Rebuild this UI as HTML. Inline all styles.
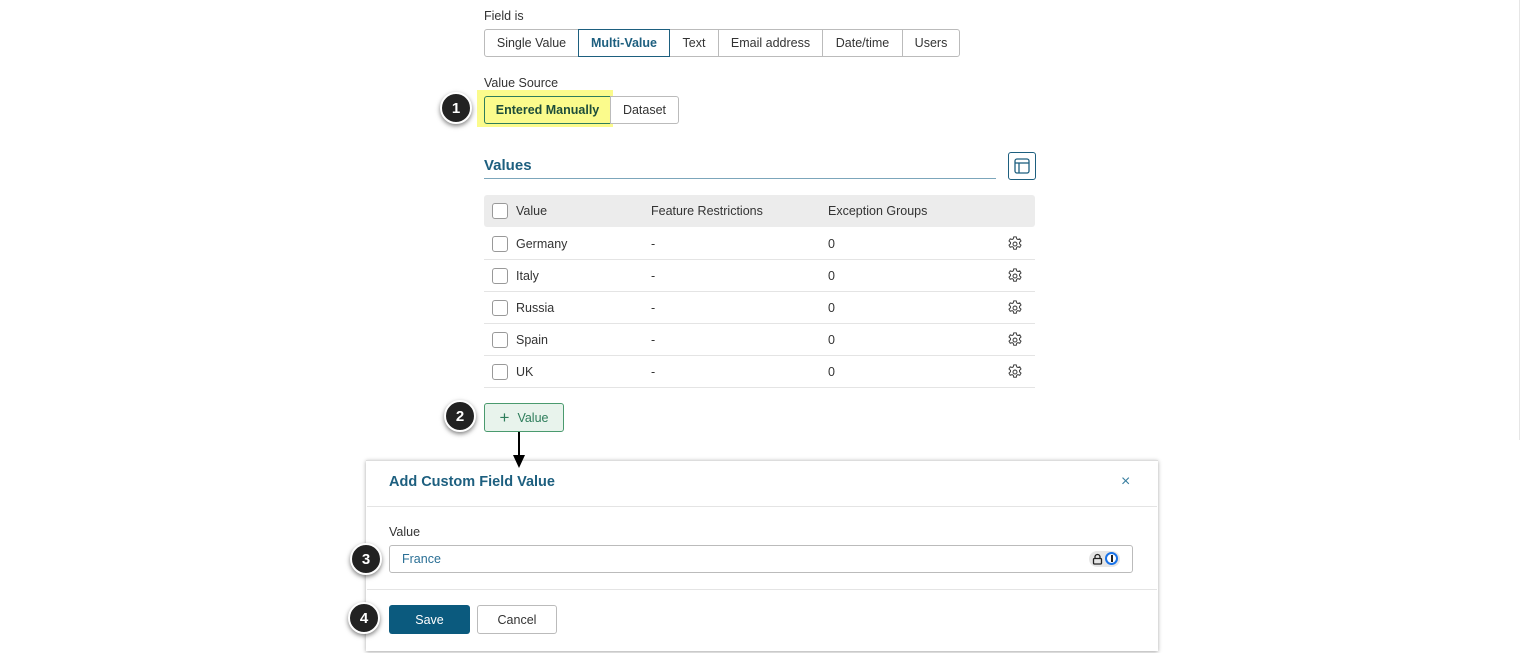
<!DOCTYPE html><html><head><style>
*{box-sizing:border-box;margin:0;padding:0}
body{width:1522px;height:653px;background:#fff;font-family:"Liberation Sans",sans-serif;font-size:12.5px;color:#333;position:relative;overflow:hidden}
.a{position:absolute}
.seg{position:absolute;top:29px;height:28px;border:1px solid #bbb;display:flex;align-items:center;justify-content:center;color:#333;background:#fff}
.badge{position:absolute;width:32px;height:32px;border-radius:50%;background:#222;border:2px solid #fff;box-shadow:0 2px 5px rgba(0,0,0,.5);color:#fff;font-weight:bold;font-size:15px;display:flex;align-items:center;justify-content:center;z-index:5}
.row{position:absolute;left:484px;width:551px;height:32px;border-bottom:1px solid #e4e4e4}
.row span{position:absolute;top:9px}
.row svg{position:absolute;left:522px;top:7px}
.cb{position:absolute;left:8px;top:8px;width:16px;height:16px;border:1px solid #999;border-radius:3px;background:#fff}
</style></head><body>
<svg width="0" height="0" style="position:absolute"><defs><symbol id="g" viewBox="0 0 24 24"><path d="M10.3 2.5h3.4l.5 2.6 1.6.9 2.5-.9 1.7 2.9-2 1.8v1.9l2 1.8-1.7 2.9-2.5-.9-1.6.9-.5 2.6h-3.4l-.5-2.6-1.6-.9-2.5.9-1.7-2.9 2-1.8v-1.9l-2-1.8 1.7-2.9 2.5.9 1.6-.9z" fill="none" stroke="#444" stroke-width="1.4" stroke-linejoin="round"/><circle cx="12" cy="12" r="2.6" fill="none" stroke="#444" stroke-width="1.4"/></symbol></defs></svg>
<div class="a" style="left:1519px;top:0;width:1px;height:440px;background:#e6e6e6"></div>
<div class="a" style="left:484px;top:9px">Field is</div>
<div class="seg" style="left:484px;width:95px;border-radius:3px 0 0 3px">Single Value</div>
<div class="seg" style="left:578px;width:92px;border-color:#1d5f7f;font-weight:bold;color:#1d5f7f;z-index:2">Multi-Value</div>
<div class="seg" style="left:669px;width:50px">Text</div>
<div class="seg" style="left:718px;width:105px">Email address</div>
<div class="seg" style="left:822px;width:81px">Date/time</div>
<div class="seg" style="left:902px;width:58px;border-radius:0 3px 3px 0">Users</div>
<div class="a" style="left:484px;top:76px">Value Source</div>
<div class="a" style="left:477px;top:90px;width:136px;height:37px;background:#fbfb8c"></div>
<div class="a" style="left:484px;top:96px;width:127px;height:28px;border:1px solid #2e7d5b;border-radius:3px 0 0 3px;display:flex;align-items:center;justify-content:center;font-weight:bold;color:#1d4d3a">Entered Manually</div>
<div class="a" style="left:610px;top:96px;width:69px;height:28px;border:1px solid #bbb;border-radius:0 3px 3px 0;display:flex;align-items:center;justify-content:center;background:#fff">Dataset</div>
<div class="badge" style="left:440px;top:92px">1</div>
<div class="a" style="left:484px;top:157px;font-size:15px;font-weight:bold;color:#1d5f7f">Values</div>
<div class="a" style="left:484px;top:178px;width:512px;height:1px;background:#7ca6bb"></div>
<div class="a" style="left:1008px;top:152px;width:28px;height:28px;border:1px solid #1d5f7f;border-radius:3px"><svg width="26" height="26" viewBox="0 0 26 26"><rect x="6" y="6" width="14" height="14" rx="2" fill="none" stroke="#1d5f7f" stroke-width="1.3"/><line x1="6" y1="10" x2="20" y2="10" stroke="#1d5f7f" stroke-width="1.3"/><line x1="10" y1="10" x2="10" y2="20" stroke="#1d5f7f" stroke-width="1.3"/></svg></div>
<div class="a" style="left:484px;top:195px;width:551px;height:32px;background:#ececec;border-radius:3px"><div class="cb"></div><span class="a" style="left:32px;top:9px">Value</span><span class="a" style="left:167px;top:9px">Feature Restrictions</span><span class="a" style="left:344px;top:9px">Exception Groups</span></div>
<div class="row" style="top:228px"><div class="cb"></div><span style="left:32px">Germany</span><span style="left:167px">-</span><span style="left:344px">0</span><svg width="18" height="18"><use href="#g"/></svg></div>
<div class="row" style="top:260px"><div class="cb"></div><span style="left:32px">Italy</span><span style="left:167px">-</span><span style="left:344px">0</span><svg width="18" height="18"><use href="#g"/></svg></div>
<div class="row" style="top:292px"><div class="cb"></div><span style="left:32px">Russia</span><span style="left:167px">-</span><span style="left:344px">0</span><svg width="18" height="18"><use href="#g"/></svg></div>
<div class="row" style="top:324px"><div class="cb"></div><span style="left:32px">Spain</span><span style="left:167px">-</span><span style="left:344px">0</span><svg width="18" height="18"><use href="#g"/></svg></div>
<div class="row" style="top:356px"><div class="cb"></div><span style="left:32px">UK</span><span style="left:167px">-</span><span style="left:344px">0</span><svg width="18" height="18"><use href="#g"/></svg></div>
<div class="a" style="left:484px;top:403px;width:80px;height:29px;background:#e8f3ec;border:1px solid #4a9a6e;border-radius:3px;color:#2e7d5b;display:flex;align-items:center;justify-content:center"><span style="font-size:17px;margin-right:8px">+</span>Value</div>
<div class="badge" style="left:444px;top:400px">2</div>
<div class="a" style="left:366px;top:460px;width:792px;height:191px;background:#fff;box-shadow:0 1px 4px rgba(0,0,0,.35);border-top:1px solid #ddd"></div>
<div class="a" style="left:518px;top:432px;width:2px;height:26px;background:#000;z-index:4"></div>
<div class="a" style="left:513px;top:455px;width:0;height:0;border-left:6px solid transparent;border-right:6px solid transparent;border-top:13px solid #000;z-index:4"></div>
<div class="a" style="left:389px;top:474px;font-size:14.5px;font-weight:bold;color:#1d5f7f">Add Custom Field Value</div>
<div class="a" style="left:1121px;top:473px;font-size:16px;color:#3a7fa0">×</div>
<div class="a" style="left:367px;top:506px;width:790px;height:1px;background:#e4e4e4"></div>
<div class="a" style="left:389px;top:525px">Value</div>
<div class="a" style="left:389px;top:545px;width:744px;height:28px;border:1px solid #bbb;border-radius:3px"><span class="a" style="left:12px;top:6px;color:#2a6f95">France</span><div class="a" style="left:699px;top:5px;width:31px;height:16px;border-radius:8px;background:#e6e6e6"></div><svg class="a" style="left:702px;top:7px" width="11" height="12" viewBox="0 0 11 12"><path d="M3 5.5V4a2.5 2.5 0 015 0v1.5" fill="none" stroke="#222" stroke-width="1.3"/><rect x="1.5" y="5.5" width="8" height="5.5" rx="1" fill="none" stroke="#222" stroke-width="1.3"/></svg><div class="a" style="left:715px;top:6px;width:13px;height:13px;border-radius:50%;border:2px solid #1a73e8;background:#fff"></div><div class="a" style="left:720.5px;top:9px;width:2px;height:7px;background:#222"></div></div>
<div class="a" style="left:367px;top:589px;width:790px;height:1px;background:#e4e4e4"></div>
<div class="a" style="left:389px;top:605px;width:81px;height:29px;background:#0b5a7e;border-radius:3px;color:#fff;display:flex;align-items:center;justify-content:center">Save</div>
<div class="a" style="left:477px;top:605px;width:80px;height:29px;border:1px solid #bbb;border-radius:3px;display:flex;align-items:center;justify-content:center">Cancel</div>
<div class="badge" style="left:350px;top:543px">3</div>
<div class="badge" style="left:348px;top:602px">4</div>
</body></html>
